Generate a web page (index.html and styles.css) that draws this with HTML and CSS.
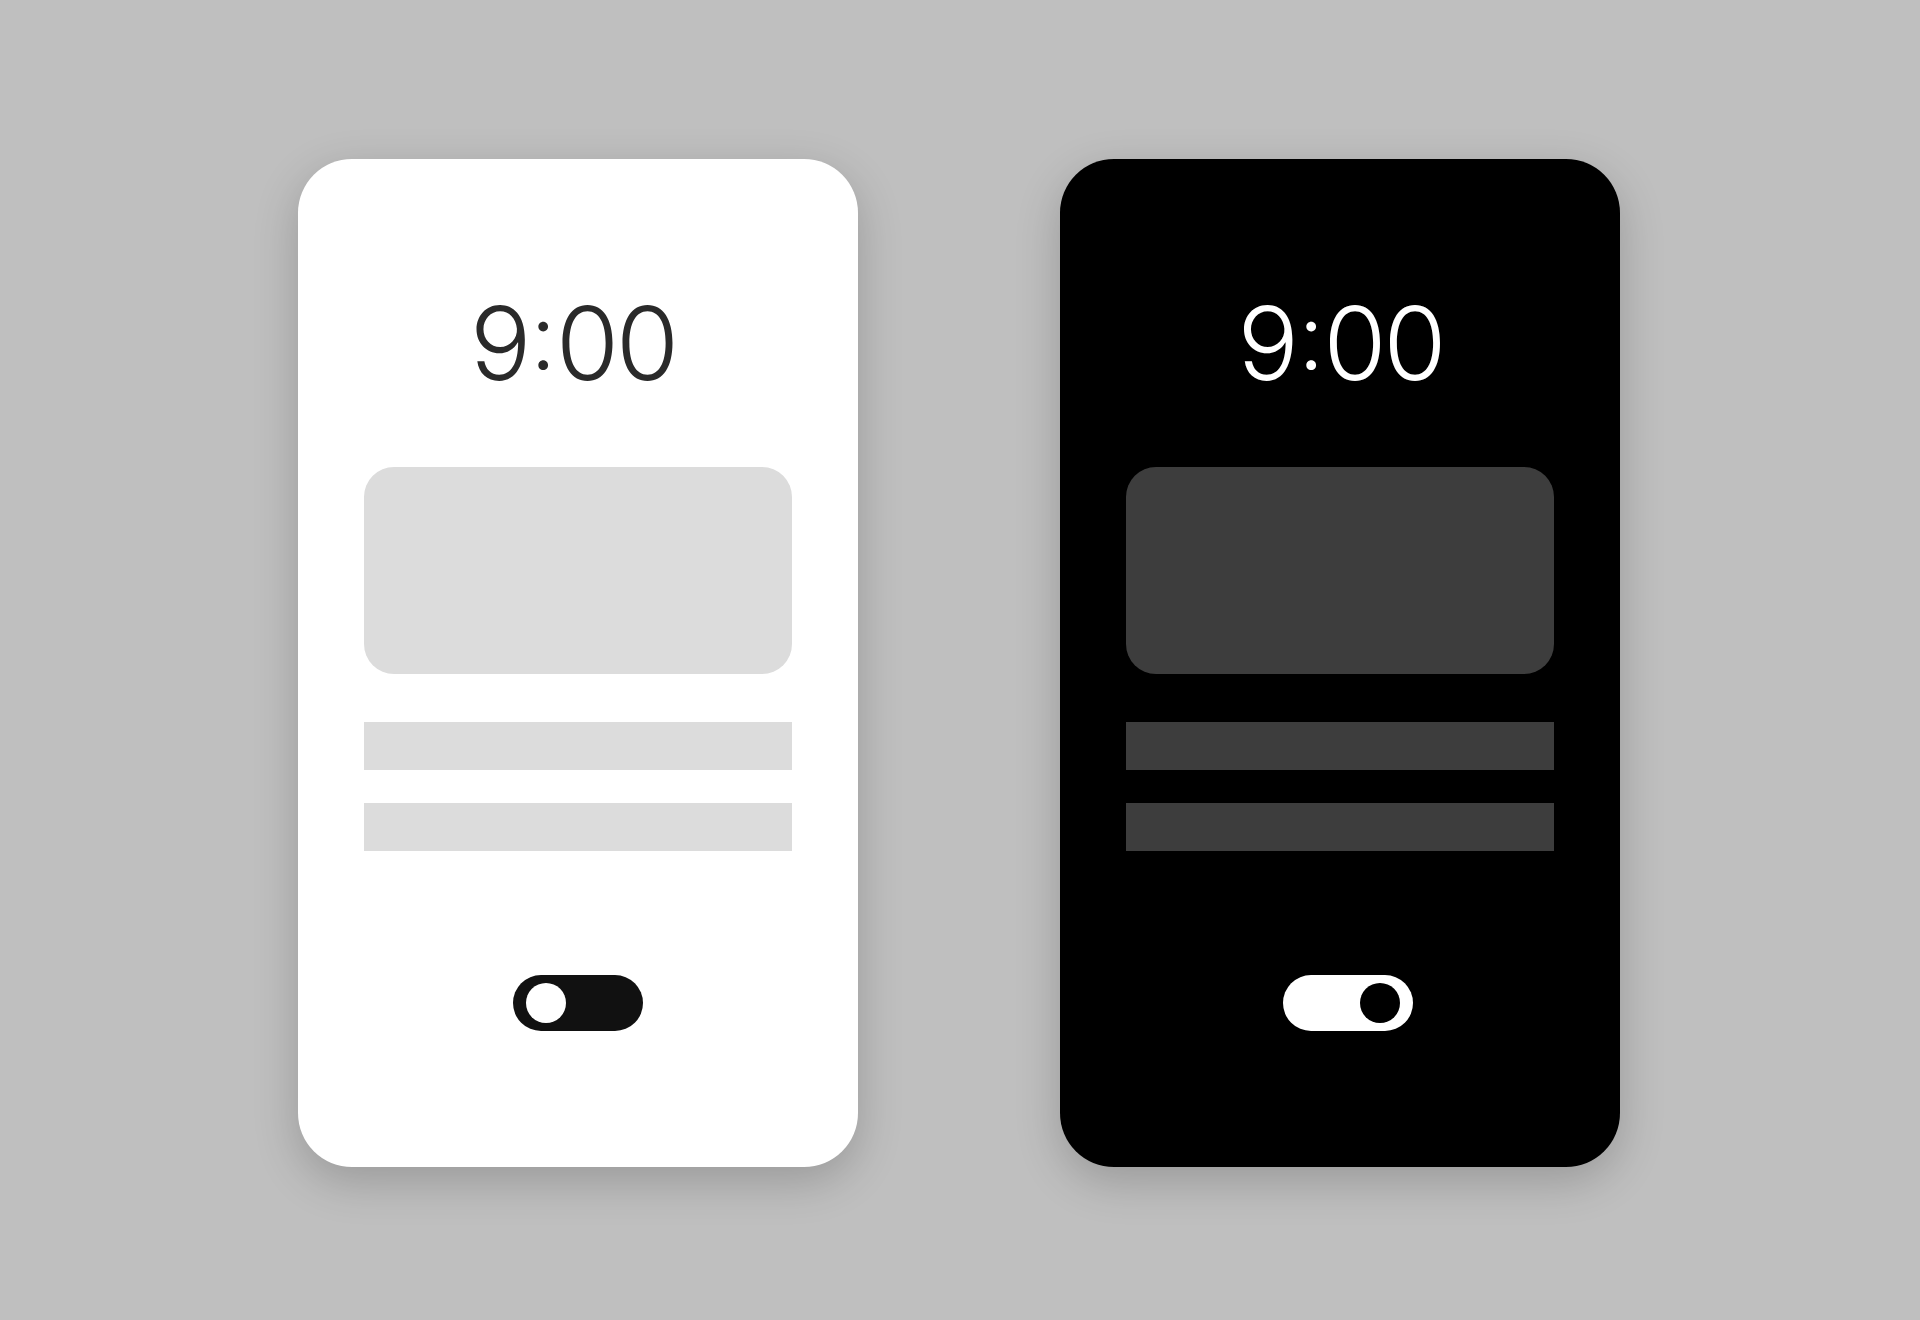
FILE: index.html
```html
<!DOCTYPE html>
<html lang="en">
<head>
<meta charset="utf-8">
<title>Light and dark mode</title>
<link rel="stylesheet" href="styles.css">
</head>
<body>
  <main class="stage">
    <section class="phone phone--light">
      <div class="clock">9<span class="sep">:</span>00</div>
      <div class="media"></div>
      <div class="line"></div>
      <div class="line line--second"></div>
      <div class="toggle toggle--off"><span class="knob"></span></div>
    </section>
    <section class="phone phone--dark">
      <div class="clock">9<span class="sep">:</span>00</div>
      <div class="media"></div>
      <div class="line"></div>
      <div class="line line--second"></div>
      <div class="toggle toggle--on"><span class="knob"></span></div>
    </section>
  </main>
</body>
</html>
```
FILE: styles.css
```css
html, body {
  margin: 0;
  padding: 0;
}

body {
  background: #bfbfbf;
  font-family: Inter, "Noto Sans", "Liberation Sans", sans-serif;
  width: 1920px;
  height: 1320px;
  overflow: hidden;
}

.stage {
  height: 1320px;
  display: flex;
  justify-content: flex-start;
  align-items: flex-start;
  gap: 202px;
  padding: 159px 0 0 298px;
  box-sizing: border-box;
}

.phone {
  width: 560px;
  height: 1008px;
  border-radius: 54px;
  box-sizing: border-box;
  padding: 0 66px;
  display: flex;
  flex-direction: column;
  align-items: stretch;
  box-shadow: 0 14px 46px rgba(0, 0, 0, 0.2);
}

.phone--light {
  background: #ffffff;
  color: #2a2a2a;
}

.phone--dark {
  background: #000000;
  color: #ffffff;
}

.clock {
  margin-top: 133px;
  font-size: 102px;
  line-height: 102px;
  font-weight: 300;
  text-align: center;
  letter-spacing: -3px;
}

.phone--light .clock {
  margin-right: 10px;
}

.phone--dark .clock {
  margin-left: 1px;
}

/* colon sits centred on the digit height, with tighter dots */
.sep {
  display: inline-block;
  margin: 0 1px;
  transform: translateY(-7px) scale(0.9);
}

.media {
  margin-top: 73px;
  height: 207px;
  border-radius: 30px;
}

.line {
  margin-top: 48px;
  height: 48px;
}

.line--second {
  margin-top: 33px;
}

.phone--light .media,
.phone--light .line {
  background: #dcdcdc;
}

.phone--dark .media,
.phone--dark .line {
  background: #3d3d3d;
}

.toggle {
  align-self: center;
  margin-top: 124px;
  width: 130px;
  height: 56px;
  border-radius: 28px;
  box-sizing: border-box;
  padding: 0 13px;
  display: flex;
  align-items: center;
}

.knob {
  width: 40px;
  height: 40px;
  border-radius: 50%;
}

.toggle--off {
  background: #111111;
  justify-content: flex-start;
}

.toggle--off .knob {
  background: #ffffff;
}

.toggle--on {
  margin-left: 15px;
  background: #ffffff;
  justify-content: flex-end;
}

.toggle--on .knob {
  background: #000000;
}
```
